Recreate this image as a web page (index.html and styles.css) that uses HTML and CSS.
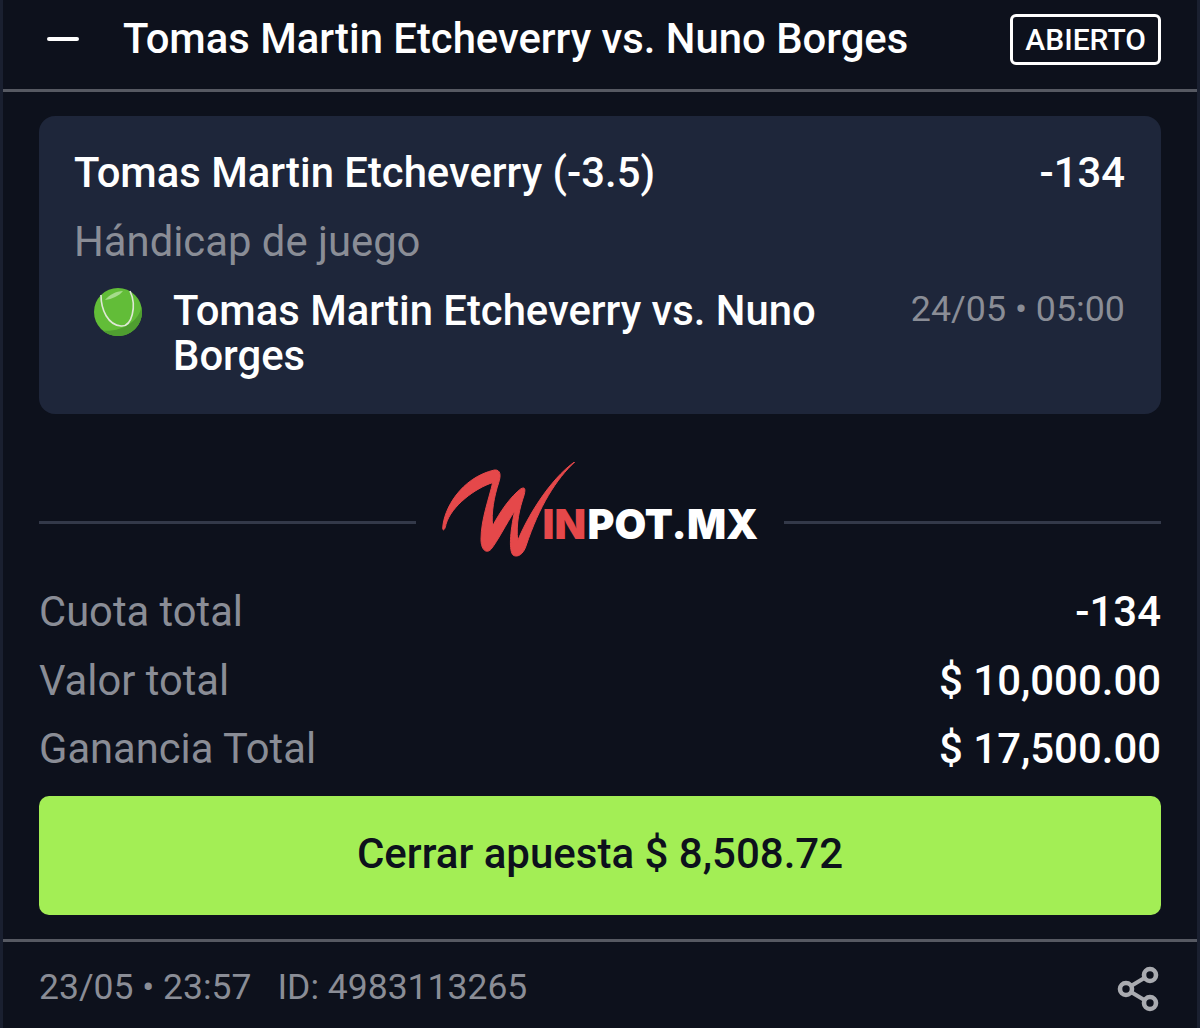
FILE: index.html
```html
<!DOCTYPE html>
<html>
<head>
  <meta charset="utf-8" />
  <title>Tomas Martin Etcheverry vs. Nuno Borges</title>
  <link rel="stylesheet" href="styles.css">
</head>
<body>

<div class="panel">
  <header class="top">
    <span class="collapse"></span>
    <h1 class="title">Tomas Martin Etcheverry vs. Nuno Borges</h1>
    <span class="status">ABIERTO</span>
  </header>

  <section class="card">
    <div class="pick">
      <span>Tomas Martin Etcheverry (-3.5)</span>
      <span>-134</span>
    </div>
    <div class="market">Hándicap de juego</div>
    <div class="event">
      <svg class="ball" viewBox="0 0 48 48">
        <circle cx="24" cy="24" r="24" fill="#62bd38"/>
        <path d="M47.5 19C45 32 30 44 9 42.7A24 24 0 0 0 47.5 19Z" fill="#4f9e30"/>
        <path d="M7 7C7 22 14 37 27 38C38 39 43 18 36 3" fill="none" stroke="#dfe8d6" stroke-width="1.6"/>
        <path d="M11 12C15 7 22 3 29 3C25 8 18 11 11 12Z" fill="#a5dc8c"/>
      </svg>
      <div class="event-name">Tomas Martin Etcheverry vs. Nuno Borges</div>
      <div class="event-date">24/05 • 05:00</div>
    </div>
  </section>

  <div class="divider">
    <svg class="logo" viewBox="0 0 320 100">
      <path class="logo-red" transform="translate(-4 -6) scale(.3333)" d="M20 218C22 160 75 65 175 42C195 40 195 60 188 80C175 120 165 170 170 210C190 170 225 120 255 98C268 92 268 100 265 115C250 160 240 200 245 255C270 190 340 70 418 16C360 70 310 150 270 270C262 295 245 305 232 298C218 285 222 230 236 165C210 205 185 255 165 280C150 295 135 280 135 250C135 190 160 125 170 80C120 95 45 150 30 205C27 222 21 225 20 218Z"/>
      <text class="logo-in" x="102.5" y="76.5">IN</text>
      <text class="logo-pot" x="147.5" y="76.5">POT.MX</text>
    </svg>
  </div>

  <section class="totals">
    <div class="row"><span class="label">Cuota total</span><span class="value">-134</span></div>
    <div class="row"><span class="label">Valor total</span><span class="value">$ 10,000.00</span></div>
    <div class="row"><span class="label">Ganancia Total</span><span class="value">$ 17,500.00</span></div>
  </section>

  <button class="cashout">Cerrar apuesta $ 8,508.72</button>

  <footer class="bottom">
    <span>23/05 • 23:57</span>
    <span class="bet-id">ID: 4983113265</span>
    <svg class="share" viewBox="-1 0 44 48">
      <path d="M28 12L13 21M13 27L28 36" fill="none" stroke="#a9abb0" stroke-width="4"/>
      <circle cx="32" cy="10" r="6" fill="none" stroke="#a9abb0" stroke-width="4.6"/>
      <circle cx="8" cy="24" r="6" fill="none" stroke="#a9abb0" stroke-width="4.6"/>
      <circle cx="32" cy="38" r="6" fill="none" stroke="#a9abb0" stroke-width="4.6"/>
    </svg>
  </footer>
</div>

</body>
</html>
```

FILE: styles.css
```css
html, body {
  height: 100%;
}
body {
  margin: 0;
  background: #1a2030;
  font-family: Roboto, "Liberation Sans", sans-serif;
  color: #fff;
  overflow: hidden;
}
.panel {
  margin: 0 3px;
  height: 1028px;
  background: #0d111c;
  overflow: hidden;
}
.top {
  display: flex;
  align-items: center;
  height: 92px;
  padding: 0 36px 12px 44px;
  box-sizing: border-box;
  border-bottom: 3px solid #565962;
}
.collapse {
  width: 32px;
  height: 4px;
  background: #fff;
  border-radius: 2px;
  margin-right: 44px;
}
.title {
  flex: 1;
  margin: 0;
  font-size: 41.8px;
  font-weight: 500;
}
.status {
  margin-top: 2px;
  border: 3px solid #fff;
  border-radius: 6px;
  padding: 0 12px;
  line-height: 45px;
  font-size: 30px;
  font-weight: 500;
}
.card {
  margin: 24px 36px 0;
  height: 298px;
  padding: 32px 36px 0 35px;
  box-sizing: border-box;
  background: #1e263a;
  border-radius: 16px;
}
.pick {
  display: flex;
  justify-content: space-between;
  font-size: 41.8px;
  font-weight: 500;
  line-height: 50px;
}
.market {
  margin-top: 19px;
  font-size: 41.8px;
  line-height: 50px;
  color: #8a8d96;
}
.event {
  display: flex;
  margin-top: 21px;
}
.ball {
  width: 48px;
  height: 48px;
  flex: none;
  margin: 0 31px 0 20px;
}
.event-name {
  flex: 1;
  font-size: 41.8px;
  font-weight: 500;
  line-height: 45px;
}
.event-date {
  font-size: 35.8px;
  line-height: 43px;
  color: #8a8d96;
  margin-left: 60px;
  white-space: nowrap;
}
.divider {
  display: flex;
  align-items: center;
  gap: 24px;
  margin: 48px 36px 0;
}
.divider::before,
.divider::after {
  content: "";
  flex: 1;
  height: 3px;
  margin-top: 20px;
  background: #333949;
}
.logo {
  width: 320px;
  height: 100px;
}
.logo-red {
  fill: #e5484a;
  stroke: #e5484a;
  stroke-width: 3px;
}
.logo-in,
.logo-pot {
  font-family: Inter, sans-serif;
  font-size: 41px;
  font-weight: 900;
}
.logo-in {
  fill: #e5484a;
}
.logo-pot {
  fill: #fff;
}
.totals {
  margin: 16px 36px 0;
}
.row {
  display: flex;
  justify-content: space-between;
  font-size: 41.7px;
  line-height: 68.5px;
}
.label {
  color: #8a8d96;
}
.value {
  font-size: 41.9px;
  font-weight: 500;
}
.cashout {
  display: block;
  width: calc(100% - 72px);
  height: 119px;
  margin: 12.5px 36px 0;
  padding: 0 0 4px;
  border: 0;
  border-radius: 10px;
  background: #a3ee55;
  color: #0d111c;
  font-family: Roboto, "Liberation Sans", sans-serif;
  font-size: 42px;
  font-weight: 500;
}
.bottom {
  display: flex;
  align-items: center;
  margin-top: 24px;
  height: 88px;
  padding: 4px 36px 0;
  border-top: 3px solid #565962;
  font-size: 35.5px;
  color: #8a8d96;
  box-sizing: border-box;
}
.bet-id {
  flex: 1;
  margin-left: 26px;
}
.share {
  width: 44px;
  height: 48px;
  margin-top: 4px;
}
```
